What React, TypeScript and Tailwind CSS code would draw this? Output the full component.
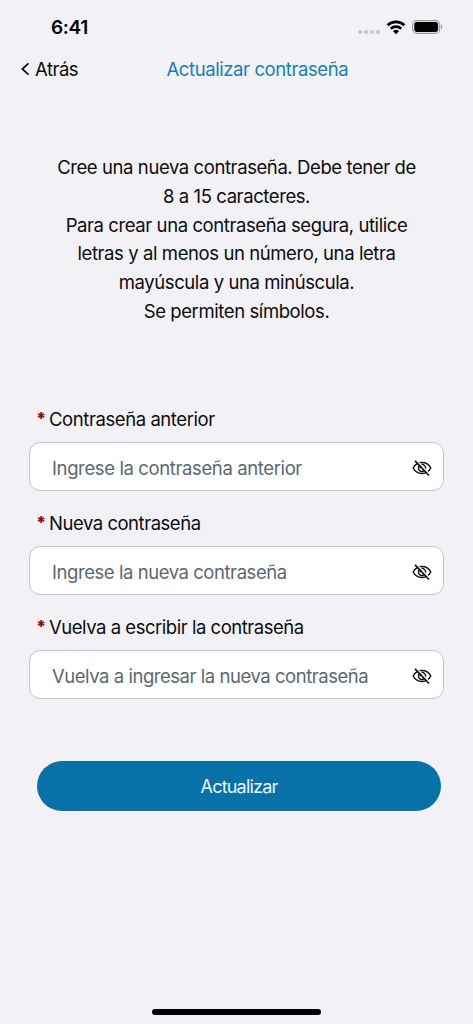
import { useState } from "react";

type Field = {
  id: string;
  label: string;
  placeholder: string;
  labelClass: string;
  inputClass: string;
};

const fields: Field[] = [
  {
    id: "current",
    label: "Contraseña anterior",
    placeholder: "Ingrese la contraseña anterior",
    labelClass: "tracking-[-0.42px]",
    inputClass: "tracking-[-0.38px]",
  },
  {
    id: "next",
    label: "Nueva contraseña",
    placeholder: "Ingrese la nueva contraseña",
    labelClass: "tracking-[-0.47px]",
    inputClass: "tracking-[-0.44px]",
  },
  {
    id: "repeat",
    label: "Vuelva a escribir la contraseña",
    placeholder: "Vuelva a ingresar la nueva contraseña",
    labelClass: "tracking-[-0.47px]",
    inputClass: "tracking-[-0.46px]",
  },
];

export default function App() {
  return (
    <main className="flex h-[1024px] w-[473px] flex-col overflow-hidden bg-[#f1f1f6] font-['Inter','Liberation_Sans',sans-serif] text-[18.5px] text-[#0c0c0e]">
      <StatusBar />

      <header className="grid h-[30px] grid-cols-[166.5px_1fr] items-center">
        <button className="flex items-center gap-[5px] pl-[21px] tracking-[-0.5px]">
          <svg width="9" height="14" viewBox="0 0 9 14" fill="none" className="mb-[2px]" aria-hidden>
            <path d="M7.5 1.3 1.3 7l6.2 5.7" stroke="#0c0c0e" strokeWidth="1.7" />
          </svg>
          Atrás
        </button>
        <h1 className="whitespace-nowrap tracking-[-0.41px] text-[#167fb8]">
          Actualizar contraseña
        </h1>
      </header>

      <p className="mt-[68px] text-center leading-[28.75px] whitespace-nowrap tracking-[-0.41px]">
        Cree una nueva contraseña. Debe tener de
        <br />8 a 15 caracteres.
        <br />
        Para crear una contraseña segura, utilice
        <br />
        letras y al menos un número, una letra
        <br />
        mayúscula y una minúscula.
        <br />
        Se permiten símbolos.
      </p>

      <form className="mt-[79.7px] flex flex-col" onSubmit={(e) => e.preventDefault()}>
        <div className="flex flex-col gap-[18px] pr-[29px] pl-[29px]">
          {fields.map((field) => (
            <PasswordField key={field.id} field={field} />
          ))}
        </div>
        <button className="mt-[62px] mr-8 ml-[37px] h-[50px] rounded-full bg-[#0871a8] text-[18px] text-[#eaf8fd] tracking-[-0.8px]">
          Actualizar
        </button>
      </form>

      <div className="mx-auto mt-auto mb-[9px] h-[6px] w-[169px] rounded-full bg-black" />
    </main>
  );
}

function StatusBar() {
  return (
    <div className="flex h-[55px] items-center justify-between pr-[30px] pl-[51px]">
      <span className="pt-px text-[19px] font-semibold tracking-[-0.3px] text-black">6:41</span>
      <div className="flex items-center pb-px">
        <svg width="22" height="6" viewBox="0 0 22 6" fill="#c5c5ca" className="mt-[9px]" aria-hidden>
          <circle cx="2.2" cy="3" r="2" />
          <circle cx="8.1" cy="3" r="2" />
          <circle cx="14" cy="3" r="2" />
          <circle cx="19.9" cy="3" r="2" />
        </svg>
        <svg width="20" height="15" viewBox="0 0 20 15" className="ml-[6px]" aria-hidden>
          <g fill="none" stroke="#000" strokeWidth="2.7">
            <path d="M1.6 5.2a12.2 12.2 0 0 1 16.8 0" />
            <path d="M4.7 8.7a7.8 7.8 0 0 1 10.6 0" />
          </g>
          <path d="M10 14.2 7 11.2a4.4 4.4 0 0 1 6 0z" />
        </svg>
        <svg width="31" height="14" viewBox="0 0 31 14" className="ml-[6px]" aria-hidden>
          <rect x="0.7" y="0.6" width="27" height="12.8" rx="4" fill="none" stroke="#97979b" strokeWidth="1.1" />
          <rect x="2.3" y="2.1" width="23.8" height="9.8" rx="2.6" />
          <path d="M29 4.8c1.7.6 1.7 3.8 0 4.4z" fill="#97979b" />
        </svg>
      </div>
    </div>
  );
}

function PasswordField({ field }: { field: Field }) {
  const [visible, setVisible] = useState(false);

  return (
    <div>
      <label htmlFor={field.id} className="flex h-[37px] items-start pl-[7px] leading-[28px]">
        <span className="w-[13px] text-[17px] font-black text-[#8e0a10]">*</span>
        <span className={field.labelClass}>{field.label}</span>
      </label>
      <div className="flex h-[49px] items-center rounded-[11px] border border-[#c5c5c7] bg-white pr-[11px] pl-[22px]">
        <input
          id={field.id}
          type={visible ? "text" : "password"}
          placeholder={field.placeholder}
          className={`min-w-0 flex-1 pt-[4px] outline-none placeholder:text-[#5a6870] ${field.inputClass}`}
        />
        <button
          type="button"
          aria-label="Mostrar contraseña"
          className="pt-[2px]"
          onClick={() => setVisible(!visible)}
        >
          <EyeOff />
        </button>
      </div>
    </div>
  );
}

function EyeOff() {
  return (
    <svg width="20" height="16" viewBox="0 0 20 16" fill="none" stroke="#111" strokeWidth="1.5" aria-hidden>
      <path d="M1.2 8C3 4.5 6.2 2.6 10 2.6S17 4.5 18.8 8C17 11.5 13.8 13.4 10 13.4S3 11.5 1.2 8z" />
      <circle cx="10" cy="8" r="3.5" />
      <path d="M8.2 8.2A1.8 1.8 0 0 1 10 6.2" />
      <path d="M4.2 0 18 14.4" stroke="#fff" strokeWidth="1.5" />
      <path d="m3 .9 14 14.6" strokeWidth="1.6" />
    </svg>
  );
}
